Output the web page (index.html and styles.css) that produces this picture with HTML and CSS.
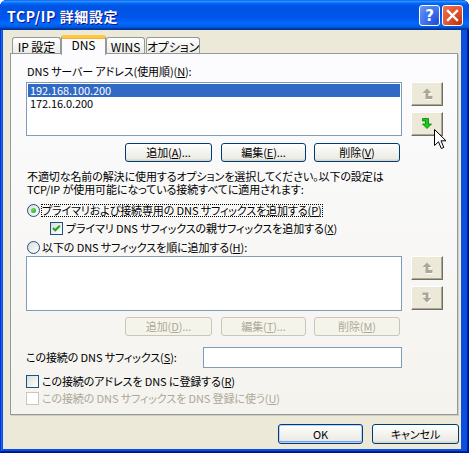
FILE: index.html
```html
<!DOCTYPE html>
<html lang="ja">
<head>
    <meta charset="UTF-8">
    <title>TCP/IP 詳細設定</title>
    <link rel="stylesheet" href="styles.css">
</head>
<body>
    <div class="window">
        <div class="titlebar">
            <span class="title">TCP/IP 詳細設定</span>
            <div class="caption">
                <span class="cbtn help">?</span>
                <span class="cbtn close">
                    <svg width="13" height="13" viewBox="0 0 13 13"><path d="M2 2 L11 11 M11 2 L2 11" stroke="#fff" stroke-width="2.4" stroke-linecap="square"/></svg>
                </span>
            </div>
        </div>
        <div class="client">
            <div class="tabs">
                <span class="tab t-ip">IP 設定</span>
                <span class="tab active t-dns">DNS</span>
                <span class="tab t-wins">WINS</span>
                <span class="tab t-opt">オプション</span>
            </div>
            <div class="panel">
                <div class="label">DNS サーバー アドレス(使用順)(<u>N</u>):</div>
                <div class="listrow">
                    <div class="listbox">
                        <div class="item sel">192.168.100.200</div>
                        <div class="item">172.16.0.200</div>
                    </div>
                    <div class="movebtns">
                        <span class="mbtn">
                            <svg width="11" height="12" viewBox="0 0 11 12"><path d="M5 0.5 L9.5 5 H6.5 V8 H10.5 V11 H3.5 V5 H0.5 Z" fill="#fff" transform="translate(1 1)"/><path d="M5 0.5 L9.5 5 H6.5 V8 H10.5 V11 H3.5 V5 H0.5 Z" fill="#aca899"/></svg>
                        </span>
                        <span class="mbtn">
                            <svg width="11" height="12" viewBox="0 0 11 12"><path d="M0.5 0.5 H6.5 V6 H9.5 L5 10.5 L0.5 6 H3.5 V3 H0.5 Z" fill="#12d012" stroke="#0a7a0a" stroke-width="0.8"/></svg>
                        </span>
                    </div>
                </div>
                <div class="btnrow">
                    <span class="btn w87">追加(<u>A</u>)...</span>
                    <span class="btn w85">編集(<u>E</u>)...</span>
                    <span class="btn w86">削除(<u>V</u>)</span>
                </div>
                <p class="desc">不適切な名前の解決に使用するオプションを選択してください。以下の設定は<br>TCP/IP が使用可能になっている接続すべてに適用されます:</p>
                <div class="opt r1">
                    <span class="radio on"></span>
                    <span class="focus">プライマリおよび接続専用の DNS サフィックスを追加する(<u>P</u>)</span>
                </div>
                <div class="opt c1">
                    <span class="check">
                        <svg width="11" height="11" viewBox="0 0 11 11"><path d="M2 5 L4.3 7.3 L8.8 2.8" fill="none" stroke="#21a121" stroke-width="2"/></svg>
                    </span>
                    <span>プライマリ DNS サフィックスの親サフィックスを追加する(<u>X</u>)</span>
                </div>
                <div class="opt r2">
                    <span class="radio"></span>
                    <span class="otext">以下の DNS サフィックスを順に追加する(<u>H</u>):</span>
                </div>
                <div class="listrow second">
                    <div class="listbox tall"></div>
                    <div class="movebtns">
                        <span class="mbtn">
                            <svg width="11" height="12" viewBox="0 0 11 12"><path d="M5 0.5 L9.5 5 H6.5 V8 H10.5 V11 H3.5 V5 H0.5 Z" fill="#fff" transform="translate(1 1)"/><path d="M5 0.5 L9.5 5 H6.5 V8 H10.5 V11 H3.5 V5 H0.5 Z" fill="#aca899"/></svg>
                        </span>
                        <span class="mbtn">
                            <svg width="11" height="12" viewBox="0 0 11 12"><path d="M0.5 0.5 H6.5 V6 H9.5 L5 10.5 L0.5 6 H3.5 V3 H0.5 Z" fill="#fff" transform="translate(1 1)"/><path d="M0.5 0.5 H6.5 V6 H9.5 L5 10.5 L0.5 6 H3.5 V3 H0.5 Z" fill="#aca899"/></svg>
                        </span>
                    </div>
                </div>
                <div class="btnrow second">
                    <span class="btn w87 disabled">追加(<u>D</u>)...</span>
                    <span class="btn w85 disabled">編集(<u>T</u>)...</span>
                    <span class="btn w86 disabled">削除(<u>M</u>)</span>
                </div>
                <div class="suffix">
                    <span>この接続の DNS サフィックス(<u>S</u>):</span>
                    <span class="textbox"></span>
                </div>
                <div class="opt c2">
                    <span class="check"></span>
                    <span>この接続のアドレスを DNS に登録する(<u>R</u>)</span>
                </div>
                <div class="opt c3 off">
                    <span class="check disabled"></span>
                    <span>この接続の DNS サフィックスを DNS 登録に使う(<u>U</u>)</span>
                </div>
            </div>
            <div class="footer">
                <span class="btn default">OK</span>
                <span class="btn cancel">キャンセル</span>
            </div>
        </div>
        <svg class="cursor" width="13" height="21" viewBox="0 0 13 21"><path d="M0.5 0.5 V16.5 L4.5 12.8 L7.3 19.5 L9.8 18.4 L7 11.8 H12 Z" fill="#fff" stroke="#000"/></svg>
    </div>
</body>
</html>
```

FILE: styles.css
```css
*{
    box-sizing: border-box;
}

body{
    margin: 0;
    background: #fff;
    font-family: "Noto Sans CJK JP", sans-serif;
    font-size: 11px;
    letter-spacing: -0.1px;
    font-feature-settings: "palt";
    color: #000;
}

u{
    text-decoration: underline;
    text-underline-offset: 1px;
}

.window{
    position: relative;
    width: 469px;
    height: 453px;
    display: flex;
    flex-direction: column;
    background: #0a4fe0;
    border-radius: 7px 7px 0 0;
    overflow: hidden;
    box-shadow: inset -1px -1px #00138c, inset 1px 1px #0831d9, inset -2px -2px #001ea0, inset 2px 2px #166aee;
}

/* title bar */
.titlebar{
    height: 30px;
    flex: none;
    display: flex;
    align-items: center;
    justify-content: space-between;
    padding: 0 6px 0 7px;
    background: linear-gradient(to bottom, #0058ee 0%, #3593ff 4%, #288eff 6%, #127dff 8%, #036ffc 10%, #0262ee 14%, #0057e5 20%, #0054e3 24%, #0055eb 56%, #005bf5 66%, #026afe 76%, #0062ef 86%, #0052d6 92%, #0040ab 94%, #003092 100%);
}

.title{
    color: #fff;
    font-weight: bold;
    font-size: 14px;
    letter-spacing: 0.6px;
    text-shadow: 1px 1px #0f1089;
    padding-top: 1px;
}

.caption{
    display: flex;
    gap: 2px;
    padding-top: 1px;
}

.cbtn{
    width: 21px;
    height: 21px;
    border: 1px solid #fff;
    border-radius: 3px;
    display: flex;
    align-items: center;
    justify-content: center;
    color: #fff;
}

.help{
    background: radial-gradient(circle at 90% 90%, #1f4fd6 0%, #3a6ee8 45%, #6f98f3 100%);
    font-family: "DejaVu Sans", sans-serif;
    font-weight: bold;
    font-size: 15px;
}

.close{
    background: radial-gradient(circle at 90% 90%, #c0350f 0%, #e0512a 50%, #ec7754 100%);
}

/* client */
.client{
    flex: 1;
    margin: 0 8px 4px 3px;
    background: #ece9d8;
    display: flex;
    flex-direction: column;
}

.tabs{
    height: 18px;
    margin-top: 5px;
    padding-left: 9px;
    display: flex;
    align-items: flex-end;
    position: relative;
    z-index: 1;
    font-size: 12px;
}

.tab{
    height: 16px;
    border: 1px solid #919b9c;
    border-bottom: none;
    border-radius: 3px 3px 0 0;
    background: linear-gradient(#fff, #ecebe6);
    display: flex;
    justify-content: center;
    align-items: center;
    line-height: 13px;
    padding-top: 1px;
    white-space: nowrap;
}

.t-ip{ width: 49px; }
.t-dns{ width: 45px; }
.t-wins{ width: 39px; }
.t-opt{ width: 54px; margin-left: 1px; }

.tab.active{
    height: 20px;
    margin-bottom: -2px;
    background: #fcfcfe;
    border-top: 3px solid #ffc83c;
    box-shadow: inset 0 1px 0 #f5b13a;
    align-items: flex-start;
    padding-top: 0;
}

.panel{
    width: 448px;
    height: 362px;
    margin-left: 7px;
    border: 1px solid #919b9c;
    background: linear-gradient(#fcfcfe, #f4f3ee);
    box-shadow: 1px 1px 0 #d0cebf;
    padding: 11px 0 0 15px;
    line-height: 13px;
}

.label{
    height: 13px;
    padding-left: 1px;
}

.listrow{
    display: flex;
    gap: 9px;
    margin-top: 4px;
}

.listrow.second{
    margin-top: 1px;
}

.listbox{
    width: 376px;
    height: 54px;
    border: 1px solid #7f9db9;
    background: #fff;
    padding: 1px;
}

.listbox.tall{
    height: 55px;
}

.item{
    height: 13px;
    padding-left: 2px;
    line-height: 13px;
    font-size: 11px;
}

.item.sel{
    background: #316ac5;
    color: #fff;
}

.movebtns{
    display: flex;
    flex-direction: column;
    gap: 6px;
}

.mbtn{
    width: 32px;
    height: 24px;
    background: #ece9d8;
    border: 1px solid;
    border-color: #fff #716f64 #716f64 #fff;
    box-shadow: inset -1px -1px #aca899;
    display: flex;
    align-items: center;
    justify-content: center;
}

.btnrow{
    display: flex;
    margin-top: 7px;
    padding-left: 99px;
    gap: 9px;
}

.btnrow.second{
    margin-top: 6px;
}

.btnrow .w85{ margin-right: -1px; }

.btn{
    height: 19px;
    border: 1px solid #003c74;
    border-radius: 3px;
    background: linear-gradient(#fff 0%, #f4f4f0 45%, #ecebe6 85%, #d6d0c5 100%);
    display: flex;
    align-items: center;
    justify-content: center;
    line-height: 13px;
}

.w87{ width: 87px; }
.w85{ width: 85px; }
.w86{ width: 86px; }

.btn.disabled{
    border-color: #c9c7ba;
    background: #f5f4ea;
    color: #aca899;
}

.desc{
    margin: 8px 0 0 1px;
    line-height: 13px;
}

.opt{
    height: 16px;
    display: flex;
    align-items: center;
    gap: 3px;
}

.r1{ margin-top: 6px; gap: 1px; }
.c1{ margin-top: 2px; padding-left: 24px; }
.r2{ margin-top: 3px; gap: 1px; }
.c2{ margin-top: 5px; }
.c3{ margin-top: 1px; }

.off{
    color: #aca899;
}

.focus{
    outline: 1px dotted #000;
    outline-offset: -1px;
    padding: 0 1px 0 1px;
    line-height: 13px;
}

.otext{
    padding-left: 1px;
}

.radio{
    width: 13px;
    height: 13px;
    margin-left: 1px;
    border-radius: 50%;
    border: 1px solid #1c5180;
    background: linear-gradient(135deg, #dcdcd7, #fff);
    display: flex;
    align-items: center;
    justify-content: center;
}

.radio.on::after{
    content: "";
    width: 5px;
    height: 5px;
    border-radius: 50%;
    background: radial-gradient(circle at 35% 35%, #62e25e, #21a121);
}

.check{
    width: 13px;
    height: 13px;
    border: 1px solid #1c5180;
    background: linear-gradient(135deg, #dcdcd7, #fff);
    display: flex;
    align-items: center;
    justify-content: center;
}

.check.disabled{
    border-color: #cac8bb;
    background: #fff;
}

.suffix{
    width: 376px;
    display: flex;
    align-items: center;
    justify-content: space-between;
    margin-top: 11px;
}

.textbox{
    width: 199px;
    height: 21px;
    border: 1px solid #7f9db9;
    background: #fff;
}

.footer{
    display: flex;
    justify-content: flex-end;
    gap: 9px;
    margin-top: 9px;
    padding-right: 2px;
}

.footer .btn{
    height: 20px;
}

.default{
    width: 85px;
    box-shadow: inset 0 0 0 1px #b9d1fa, inset 0 -1px 0 1px #7b9ff0;
}

.cancel{
    width: 87px;
}

.cursor{
    position: absolute;
    left: 434px;
    top: 129px;
}
```
